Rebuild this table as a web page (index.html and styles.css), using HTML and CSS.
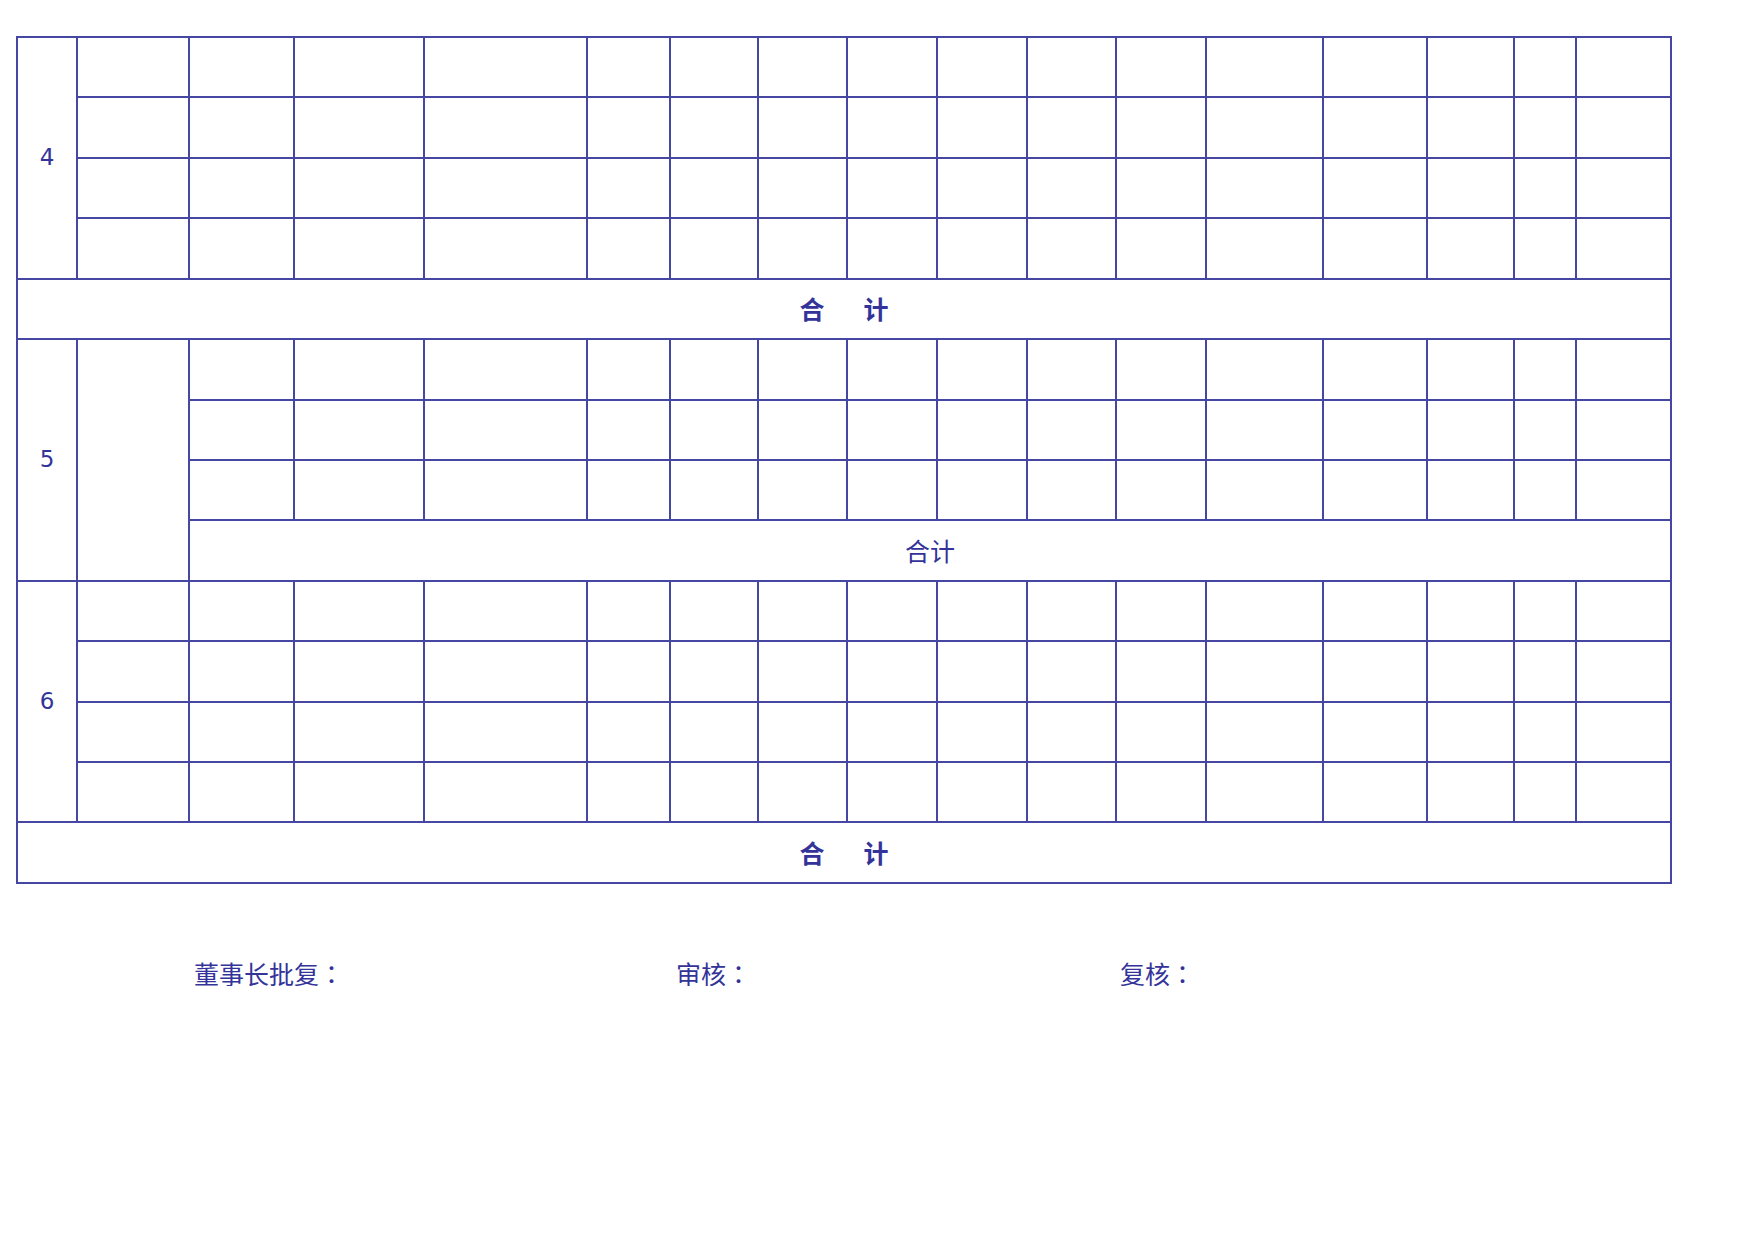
FILE: index.html
```html
<!DOCTYPE html>
<html lang="zh-CN">
<head>
<meta charset="utf-8">
<title>表格</title>
<link rel="stylesheet" href="styles.css">
</head>
<body>
<div class="sheet">
  <div class="grid">
    <div class="c num">4</div>
    <div class="c"></div><div class="c"></div><div class="c"></div><div class="c"></div><div class="c"></div><div class="c"></div><div class="c"></div><div class="c"></div><div class="c"></div><div class="c"></div><div class="c"></div><div class="c"></div><div class="c"></div><div class="c"></div><div class="c"></div><div class="c"></div>
    <div class="c"></div><div class="c"></div><div class="c"></div><div class="c"></div><div class="c"></div><div class="c"></div><div class="c"></div><div class="c"></div><div class="c"></div><div class="c"></div><div class="c"></div><div class="c"></div><div class="c"></div><div class="c"></div><div class="c"></div><div class="c"></div>
    <div class="c"></div><div class="c"></div><div class="c"></div><div class="c"></div><div class="c"></div><div class="c"></div><div class="c"></div><div class="c"></div><div class="c"></div><div class="c"></div><div class="c"></div><div class="c"></div><div class="c"></div><div class="c"></div><div class="c"></div><div class="c"></div>
    <div class="c"></div><div class="c"></div><div class="c"></div><div class="c"></div><div class="c"></div><div class="c"></div><div class="c"></div><div class="c"></div><div class="c"></div><div class="c"></div><div class="c"></div><div class="c"></div><div class="c"></div><div class="c"></div><div class="c"></div><div class="c"></div>
    <div class="c total-full"><span>合</span><span class="gap"></span><span>计</span></div>

    <div class="c num">5</div>
    <div class="c tall"></div>
    <div class="c"></div><div class="c"></div><div class="c"></div><div class="c"></div><div class="c"></div><div class="c"></div><div class="c"></div><div class="c"></div><div class="c"></div><div class="c"></div><div class="c"></div><div class="c"></div><div class="c"></div><div class="c"></div><div class="c"></div>
    <div class="c"></div><div class="c"></div><div class="c"></div><div class="c"></div><div class="c"></div><div class="c"></div><div class="c"></div><div class="c"></div><div class="c"></div><div class="c"></div><div class="c"></div><div class="c"></div><div class="c"></div><div class="c"></div><div class="c"></div>
    <div class="c"></div><div class="c"></div><div class="c"></div><div class="c"></div><div class="c"></div><div class="c"></div><div class="c"></div><div class="c"></div><div class="c"></div><div class="c"></div><div class="c"></div><div class="c"></div><div class="c"></div><div class="c"></div><div class="c"></div>
    <div class="c total-sub">合计</div>

    <div class="c num">6</div>
    <div class="c"></div><div class="c"></div><div class="c"></div><div class="c"></div><div class="c"></div><div class="c"></div><div class="c"></div><div class="c"></div><div class="c"></div><div class="c"></div><div class="c"></div><div class="c"></div><div class="c"></div><div class="c"></div><div class="c"></div><div class="c"></div>
    <div class="c"></div><div class="c"></div><div class="c"></div><div class="c"></div><div class="c"></div><div class="c"></div><div class="c"></div><div class="c"></div><div class="c"></div><div class="c"></div><div class="c"></div><div class="c"></div><div class="c"></div><div class="c"></div><div class="c"></div><div class="c"></div>
    <div class="c"></div><div class="c"></div><div class="c"></div><div class="c"></div><div class="c"></div><div class="c"></div><div class="c"></div><div class="c"></div><div class="c"></div><div class="c"></div><div class="c"></div><div class="c"></div><div class="c"></div><div class="c"></div><div class="c"></div><div class="c"></div>
    <div class="c"></div><div class="c"></div><div class="c"></div><div class="c"></div><div class="c"></div><div class="c"></div><div class="c"></div><div class="c"></div><div class="c"></div><div class="c"></div><div class="c"></div><div class="c"></div><div class="c"></div><div class="c"></div><div class="c"></div><div class="c"></div>
    <div class="c total-full"><span>合</span><span class="gap"></span><span>计</span></div>
  </div>

  <div class="signs">
    <div class="sign">董事长批复<span class="colon">：</span></div>
    <div class="sign">审核<span class="colon">：</span></div>
    <div class="sign">复核<span class="colon">：</span></div>
  </div>
</div>
</body>
</html>
```

FILE: styles.css
```css
html, body {
  margin: 0;
  padding: 0;
  background: #ffffff;
}

body {
  font-family: "Noto Sans CJK SC", "Noto Sans", sans-serif;
  color: #333399;
}

.sheet {
  padding: 36px 0 0 16px;
}

.grid {
  display: grid;
  width: max-content;
  grid-template-columns: 60px 112px 105px 130px 163px 83px 88px 89px 90px 90px 89px 90px 117px 104px 87px 62px 95px;
  grid-template-rows: repeat(14, 60.43px);
  border-top: 2px solid #4646a3;
  border-left: 2px solid #4646a3;
}

.c {
  box-sizing: border-box;
  border-right: 2px solid #4646a3;
  border-bottom: 2px solid #4646a3;
  display: flex;
  align-items: center;
  justify-content: center;
  font-size: 25px;
  line-height: 1;
}

.num {
  grid-row: span 4;
  font-family: "DejaVu Sans", sans-serif;
  font-size: 23px;
}

.tall {
  grid-row: span 4;
}

.total-full {
  grid-column: 1 / -1;
  font-weight: 700;
}

.total-sub {
  grid-column: 3 / -1;
}

.gap {
  display: inline-block;
  width: 39px;
}

.signs {
  display: grid;
  grid-template-columns: 482px 444px auto;
  padding-left: 178px;
  margin-top: 77px;
  font-size: 25px;
  line-height: 1;
}

.sign {
  white-space: nowrap;
}

.colon {
  display: inline-block;
  width: 25px;
  text-align: center;
  font-family: "Noto Sans CJK TC", sans-serif;
  font-feature-settings: "chws" 0, "halt" 0, "palt" 0;
}
```
